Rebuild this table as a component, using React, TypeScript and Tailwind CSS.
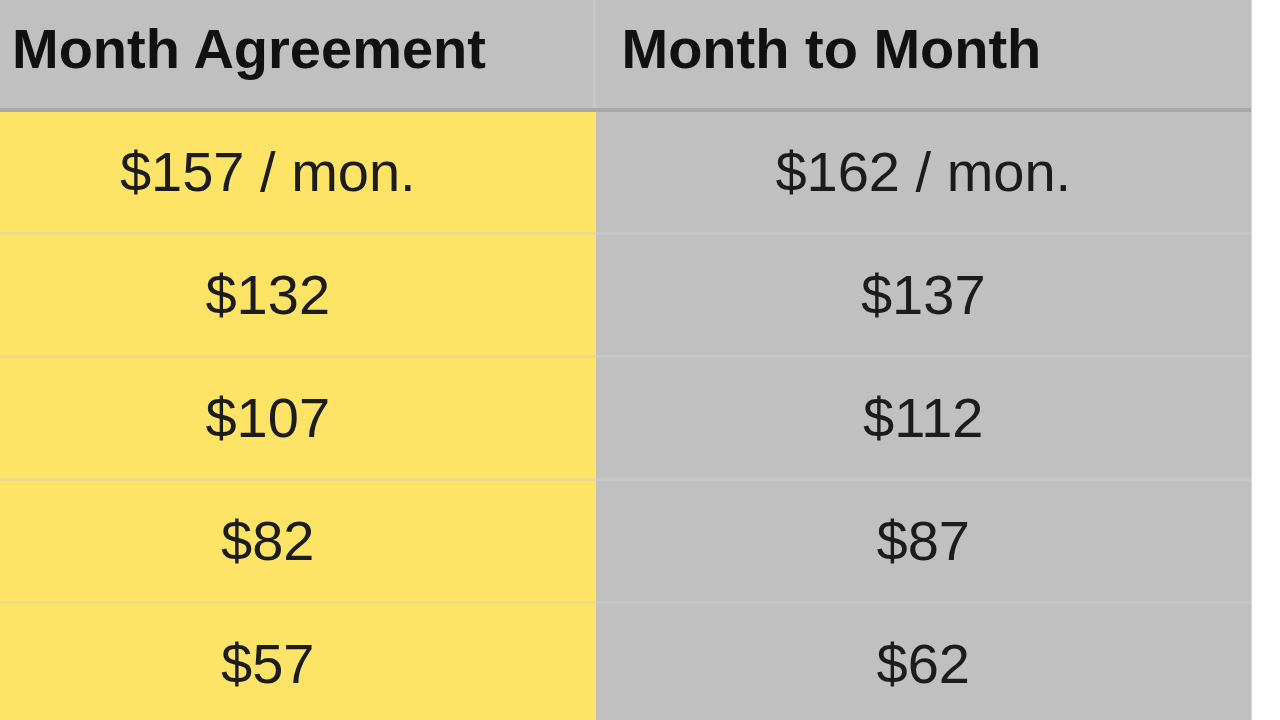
import React from "react";

const rows = [
  ["$157 / mon.", "$162 / mon."],
  ["$132", "$137"],
  ["$107", "$112"],
  ["$82", "$87"],
  ["$57", "$62"],
];

export default function App() {
  return (
    <div
      className="w-[1280px] h-[720px] bg-white overflow-hidden"
      style={{ fontFamily: '"Liberation Sans", Arial, Helvetica, sans-serif' }}
    >
      <div className="ml-[-60px] w-[1312px] border-r border-[#d4d4d4]">
        <div className="grid grid-cols-2 h-[112px] bg-[#c0c0c0] border-b-[4px] border-[#a8a8a8]">
          <div className="pl-[72px] pt-[21px] border-r-[3px] border-[#c6c6c6] text-[56px] leading-[56px] font-bold text-[#111] whitespace-nowrap">
            Month Agreement
          </div>
          <div className="pl-[26px] pt-[21px] text-[56px] leading-[56px] font-bold text-[#111] whitespace-nowrap">
            Month to Month
          </div>
        </div>
        {rows.map(([a, b], i) => (
          <div key={i} className="grid grid-cols-2">
            <div className="h-[123px] bg-[#fde467] border-b-[3px] border-[#ebdc8c] flex items-center justify-center text-[56px] leading-[56px] text-[#1c1c1c]">
              {a}
            </div>
            <div className="h-[123px] bg-[#c0c0c0] border-b-[3px] border-[#c6c6c6] flex items-center justify-center text-[56px] leading-[56px] text-[#1c1c1c]">
              {b}
            </div>
          </div>
        ))}
      </div>
    </div>
  );
}
